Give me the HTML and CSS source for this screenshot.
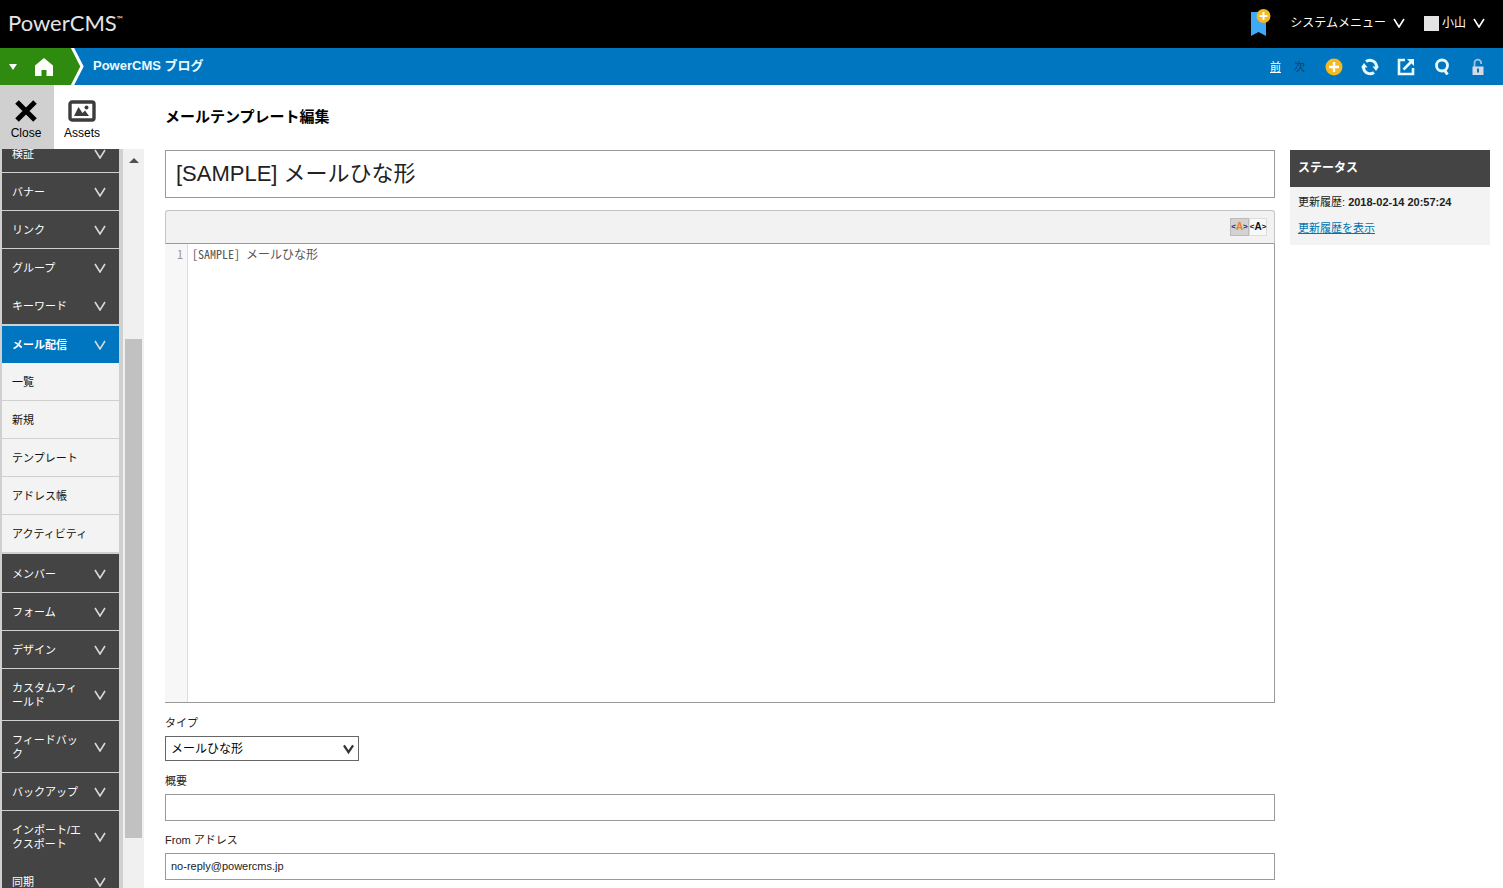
FILE: index.html
```html
<!DOCTYPE html>
<html lang="ja">
<head>
    <meta charset="UTF-8">
    <title>メールテンプレート編集 | PowerCMS</title>
    <link rel="stylesheet" href="styles.css">
</head>
<body>
<svg class="defs" aria-hidden="true">
    <symbol id="chevron" viewBox="0 0 12 10"><path d="M1 1l5 8 5-8" fill="none" stroke="currentColor" stroke-width="1.6"/></symbol>
</svg>

<header id="header">
    <a href="#" class="logo">PowerCMS<sup>™</sup></a>
    <ul class="user-menu">
        <li><button type="button" class="bookmark" aria-label="ブックマーク">
            <svg width="22" height="28" viewBox="0 0 22 28">
                <path d="M2 3h15v24l-7.500-4L2 27z" fill="#3fa9f5"/>
                <circle cx="14.500" cy="7" r="7" fill="#f5b922"/>
                <path d="M14.500 3v8M10.500 7h8" stroke="#fff" stroke-width="2"/>
            </svg>
        </button></li>
        <li class="system"><button type="button">システムメニュー <svg class="chev"><use href="#chevron"/></svg></button></li>
        <li><button type="button"><span class="avatar"></span>小山 <svg class="chev"><use href="#chevron"/></svg></button></li>
    </ul>
</header>

<div id="blogbar">
    <div class="home">
        <button type="button" aria-label="ブログ選択"><svg width="8" height="6" viewBox="0 0 8 6"><path d="M0 0h8L4 6z" fill="#fff"/></svg></button>
        <a href="#" aria-label="ホーム"><svg width="18" height="18" viewBox="0 0 18 18"><path d="M9 0l9 7.500V18h-6.500v-6h-5v6H0V7.500z" fill="#fff"/></svg></a>
    </div>
    <svg class="arrow" width="14" height="37" viewBox="0 0 14 37">
        <path d="M0 0h2l9 18.500L2 37H0z" fill="#2f8a10"/>
        <path d="M1 -1l10 19.500L1 38" fill="none" stroke="#fff" stroke-width="3"/>
    </svg>
    <a href="#" class="blog-name">PowerCMS ブログ</a>
    <ul class="tools">
        <li class="prev"><a href="#">前</a></li>
        <li class="next">次</li>
        <li><button type="button" aria-label="新規"><svg width="18" height="18" viewBox="0 0 18 18"><circle cx="9" cy="9" r="8.500" fill="#f5b922"/><path d="M9 4v10M4 9h10" stroke="#fff" stroke-width="2.400"/></svg></button></li>
        <li><button type="button" aria-label="再構築"><svg width="18" height="18" viewBox="0 0 18 18"><g fill="none" stroke="#e9fbff" stroke-width="3"><path d="M5 3.500C9 .5 16 3 15.500 10"/><path d="M13 14.500C9 17.500 2 15 2.500 8"/></g><path d="M11.500 8.500H18L15 13zM6.500 9.500H0L3 5z" fill="#e9fbff"/></svg></button></li>
        <li><button type="button" aria-label="サイトを表示"><svg width="18" height="18" viewBox="0 0 18 18"><path d="M8 2H2v14h14v-6" fill="none" stroke="#e9fbff" stroke-width="2.600"/><path d="M6.500 11.500L14 4" stroke="#e9fbff" stroke-width="2.600"/><path d="M10 1h7v7z" fill="#e9fbff"/></svg></button></li>
        <li><button type="button" aria-label="検索"><svg width="18" height="18" viewBox="0 0 18 18"><circle cx="9" cy="7.500" r="5.500" fill="none" stroke="#e9fbff" stroke-width="2.800"/><path d="M11 11.500l3.500 5" stroke="#e9fbff" stroke-width="3"/></svg></button></li>
        <li><button type="button" aria-label="ロック"><svg width="18" height="18" viewBox="0 0 18 18"><path d="M5.500 9V5a3.300 3.300 0 0 1 6.600 0v1" fill="none" stroke="#a5bfdd" stroke-width="1.800"/><path d="M3.500 8.500h11V17h-11z" fill="#d5dbe6"/><path d="M9 10.500v4" stroke="#0075c0" stroke-width="2"/></svg></button></li>
    </ul>
</div>

<div id="container">
    <div id="side">
        <div class="panel-tabs">
            <button type="button" class="close">
                <svg width="24" height="24" viewBox="0 0 24 24"><path d="M3 3l18 18M21 3L3 21" stroke="#000" stroke-width="5"/></svg>
                Close
            </button>
            <button type="button">
                <svg width="28" height="24" viewBox="0 0 28 24"><rect x="2" y="3" width="24" height="18" rx="2" fill="#fff" stroke="#3c3c3c" stroke-width="3.400"/><path d="M6 17l4.500-9 4 6 2.500-2.500 4 5.500z" fill="#3c3c3c"/><circle cx="18.500" cy="8.500" r="2" fill="#3c3c3c"/></svg>
                Assets
            </button>
        </div>
        <div class="nav-wrap">
            <nav>
                <ul class="menu">
                    <li><a href="#">検証<svg class="chev"><use href="#chevron"/></svg></a></li>
                    <li><a href="#">バナー<svg class="chev"><use href="#chevron"/></svg></a></li>
                    <li><a href="#">リンク<svg class="chev"><use href="#chevron"/></svg></a></li>
                    <li class="joined"><a href="#">グループ<svg class="chev"><use href="#chevron"/></svg></a></li>
                    <li><a href="#">キーワード<svg class="chev"><use href="#chevron"/></svg></a></li>
                    <li class="active"><a href="#">メール配信<svg class="chev"><use href="#chevron"/></svg></a>
                        <ul class="submenu">
                            <li><a href="#">一覧</a></li>
                            <li><a href="#">新規</a></li>
                            <li><a href="#">テンプレート</a></li>
                            <li><a href="#">アドレス帳</a></li>
                            <li><a href="#">アクティビティ</a></li>
                        </ul>
                    </li>
                    <li><a href="#">メンバー<svg class="chev"><use href="#chevron"/></svg></a></li>
                    <li><a href="#">フォーム<svg class="chev"><use href="#chevron"/></svg></a></li>
                    <li><a href="#">デザイン<svg class="chev"><use href="#chevron"/></svg></a></li>
                    <li><a href="#"><span>カスタムフィールド</span><svg class="chev"><use href="#chevron"/></svg></a></li>
                    <li><a href="#"><span>フィードバック</span><svg class="chev"><use href="#chevron"/></svg></a></li>
                    <li><a href="#"><span>バックアップ</span><svg class="chev"><use href="#chevron"/></svg></a></li>
                    <li class="joined"><a href="#"><span>インポート/エクスポート</span><svg class="chev"><use href="#chevron"/></svg></a></li>
                    <li><a href="#">同期<svg class="chev"><use href="#chevron"/></svg></a></li>
                </ul>
            </nav>
            <div class="scrollbar">
                <svg width="10" height="5" viewBox="0 0 10 5"><path d="M0 5l5-5 5 5z" fill="#505050"/></svg>
                <div class="track"><div class="thumb"></div></div>
            </div>
        </div>
    </div>

    <main>
        <h1>メールテンプレート編集</h1>
        <div class="columns">
            <form>
                <input type="text" class="title" aria-label="タイトル" value="[SAMPLE] メールひな形">
                <div class="editor">
                    <div class="editor-bar">
                        <button type="button" class="on" aria-label="ハイライトあり"><b>&lt;</b><i>A</i><b>&gt;</b></button><button type="button" aria-label="ハイライトなし"><b>&lt;</b><i>A</i><b>&gt;</b></button>
                    </div>
                    <div class="editor-body">
                        <div class="gutter">1</div>
                        <textarea aria-label="本文" spellcheck="false">[SAMPLE] メールひな形</textarea>
                    </div>
                </div>
                <div class="field">
                    <label for="type">タイプ</label>
                    <div class="select">
                        <select id="type"><option>メールひな形</option></select>
                        <svg width="11" height="10" viewBox="0 0 12 10"><path d="M1 1l5 7.500L11 1" fill="none" stroke="#333" stroke-width="2.400"/></svg>
                    </div>
                </div>
                <div class="field">
                    <label for="description">概要</label>
                    <input type="text" id="description">
                </div>
                <div class="field">
                    <label for="from">From アドレス</label>
                    <input type="text" id="from" value="no-reply@powercms.jp">
                </div>
            </form>
            <aside>
                <h2>ステータス</h2>
                <div class="status">
                    <p>更新履歴: <strong>2018-02-14 20:57:24</strong></p>
                    <p><a href="#">更新履歴を表示</a></p>
                </div>
            </aside>
        </div>
    </main>
</div>
</body>
</html>
```
FILE: styles.css
```css
* {
    box-sizing: border-box;
}
body {
    display: flex;
    flex-direction: column;
    height: 100vh;
    margin: 0;
    overflow: hidden;
    background: #fff;
    color: #222;
    font: 11px/14px "Liberation Sans", "Noto Sans CJK JP", sans-serif;
}
ul {
    margin: 0;
    padding: 0;
    list-style: none;
}
button {
    padding: 0;
    border: 0;
    background: none;
    color: inherit;
    font: inherit;
}
svg {
    display: block;
    flex: none;
}
.defs {
    position: absolute;
    width: 0;
    height: 0;
}
.chev {
    width: 12px;
    height: 10px;
}

/* header */
#header {
    display: flex;
    flex: none;
    align-items: center;
    justify-content: space-between;
    height: 48px;
    padding: 0 18px 2px 8px;
    background: #000;
    color: #fff;
}
.logo {
    color: #e4e4e4;
    font: 22px/24px Lato, sans-serif;
    text-decoration: none;
}
.logo sup {
    font-size: 8px;
    line-height: 8px;
    vertical-align: 9px;
}
.user-menu {
    display: flex;
    align-items: center;
    font-size: 12px;
}
.user-menu button {
    display: flex;
    align-items: center;
    gap: 7px;
}
.system {
    margin: 0 19px;
}
.avatar {
    width: 15px;
    height: 15px;
    margin-right: -4px;
    background: #e4e4e4;
}

/* blog bar */
#blogbar {
    display: flex;
    flex: none;
    height: 37px;
    padding-right: 16px;
    background: #0075c0;
    color: #fff;
}
.home {
    display: flex;
    align-items: center;
    gap: 18px;
    width: 71px;
    padding-left: 9px;
    background: #2f8a10;
}
.blog-name {
    margin-left: 8px;
    color: #e9fbff;
    font-size: 13px;
    font-weight: bold;
    line-height: 35px;
    text-decoration: none;
}
.tools {
    display: flex;
    align-items: center;
    gap: 18px;
    margin-left: auto;
}
.tools a {
    color: #fff;
}
.tools button {
    display: block;
}
.prev {
    margin-right: -5px;
}
.next {
    margin-right: 2px;
    color: #123f66;
}

#container {
    display: flex;
    flex: 1;
    min-height: 0;
}

/* side menu */
#side {
    display: flex;
    flex: none;
    flex-direction: column;
    width: 144px;
}
.panel-tabs {
    display: flex;
    flex: none;
    height: 64px;
}
.panel-tabs button {
    display: flex;
    flex-direction: column;
    align-items: center;
    width: 56px;
    padding-top: 14px;
    gap: 3px;
    color: #000;
    font-size: 12px;
}
.panel-tabs .close {
    width: 54px;
    padding-right: 2px;
    background: #d0d0d0;
}
.nav-wrap {
    display: flex;
    flex: 1;
    min-height: 0;
}
nav {
    width: 123px;
    padding: 0 4px 0 2px;
    overflow: hidden;
    background: #d0d0d0;
}
/* list is scrolled part of the way through the first item */
.menu {
    margin-top: -14px;
}
.menu a {
    display: flex;
    align-items: center;
    justify-content: space-between;
    min-height: 37px;
    padding: 12px 13px 11px 10px;
    background: #444;
    color: #fff;
    text-decoration: none;
}
.menu li {
    border-bottom: 1px solid #d0d0d0;
}
.menu .joined {
    border-color: #444;
}
.menu span {
    width: 70px;
    line-break: anywhere;
}
.menu .chev {
    color: #d8d8d8;
}
.menu .active {
    padding-bottom: 1px;
    border-top: 1px solid #d0d0d0;
    border-bottom: 0;
}
.active + li {
    border-top: 1px solid #444;
}
.active > a {
    background: #0075c0;
    font-weight: bold;
}
.submenu a {
    background: #f3f3f3;
    color: #111;
}
.scrollbar {
    display: flex;
    flex: 1;
    flex-direction: column;
    align-items: center;
    padding: 9px 2px 17px;
    background: #f0f0f0;
}
.track {
    display: flex;
    flex: 1;
    flex-direction: column;
    justify-content: flex-end;
    width: 17px;
    padding-bottom: 33px;
}
.thumb {
    height: 74%;
    background: #c1c1c1;
}

/* main */
main {
    flex: 1;
    min-width: 0;
    padding: 0 13px 0 21px;
}
h1 {
    margin: 0;
    padding: 22px 0 23px;
    color: #000;
    font-size: 15px;
    line-height: 20px;
}
.columns {
    display: flex;
    align-items: flex-start;
    gap: 15px;
}
form {
    flex: 1;
    min-width: 0;
}
input,
select {
    display: block;
    width: 100%;
    height: 27px;
    padding: 0 5px 2px;
    border: 1px solid #999;
    border-radius: 0;
    background: #fff;
    color: #222;
    font: inherit;
}
.title {
    height: 48px;
    padding: 0 10px 6px;
    font-size: 22px;
}
.editor {
    margin-top: 12px;
}
.editor-bar {
    display: flex;
    align-items: center;
    justify-content: flex-end;
    height: 34px;
    padding-right: 7px;
    border: 1px solid #c4c4c4;
    border-bottom-color: #999;
    border-radius: 3px 3px 0 0;
    background: #f2f2f2;
}
.editor-bar button {
    display: flex;
    align-items: center;
    justify-content: center;
    width: 18px;
    height: 18px;
    border: 1px solid #ddd;
    background: #f8f8f8;
    color: #111;
    font-size: 10px;
    font-weight: bold;
}
.editor-bar b {
    font-size: 8px;
}
.editor-bar i {
    font-style: normal;
}
.editor-bar .on {
    width: 19px;
    border-color: #bbb;
    background: #d2d2d2;
    color: #22228a;
}
.editor-bar .on i {
    color: #f08020;
}
.editor-body {
    display: flex;
    height: 459px;
    border-right: 1px solid #999;
    border-bottom: 1px solid #999;
    font: 12px/14px "Noto Sans CJK JP", monospace;
    font-feature-settings: "hwid";
}
.gutter {
    width: 23px;
    padding: 3px 4px 0 0;
    border-right: 1px solid #ddd;
    background: #f7f7f7;
    color: #999;
    text-align: right;
}
textarea {
    flex: 1;
    padding: 3px 4px;
    border: 0;
    outline: 0;
    resize: none;
    color: #555;
    font: inherit;
    font-feature-settings: inherit;
}
.field {
    margin-top: 12px;
}
label {
    display: block;
    margin-bottom: 6px;
}
.editor + .field {
    margin: 13px 0;
}
.select {
    display: flex;
    align-items: center;
    width: 194px;
}
.select select {
    height: 25px;
    padding-bottom: 0;
    border-color: #666;
    appearance: none;
    color: #000;
    font-size: 12px;
}
.select svg {
    margin-left: -16px;
    pointer-events: none;
}

/* status box */
aside {
    flex: none;
    width: 200px;
    background: #f3f3f3;
}
h2 {
    margin: 0;
    padding: 10px 8px 11px;
    background: #444;
    color: #fff;
    font-size: 12px;
    line-height: 16px;
}
.status {
    padding: 8px 8px 10px;
}
.status p {
    margin: 0 0 12px;
}
.status p:last-child {
    margin: 0;
}
.status a {
    color: #0075b0;
}
```
